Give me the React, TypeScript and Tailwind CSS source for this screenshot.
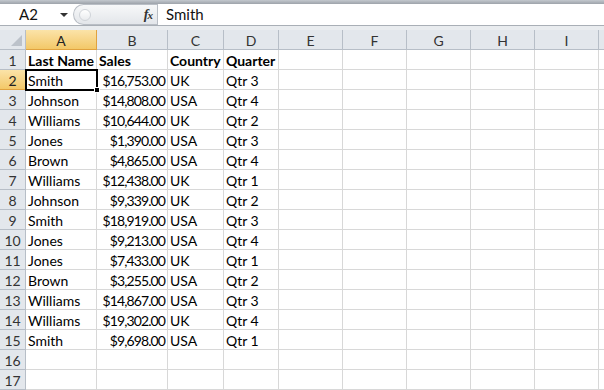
import React from "react"

const cols = ["A", "B", "C", "D", "E", "F", "G", "H", "I", ""]

const rows: string[][] = [
  ["Last Name", "Sales", "Country", "Quarter"],
  ["Smith", "$16,753.00", "UK", "Qtr 3"],
  ["Johnson", "$14,808.00", "USA", "Qtr 4"],
  ["Williams", "$10,644.00", "UK", "Qtr 2"],
  ["Jones", "$1,390.00", "USA", "Qtr 3"],
  ["Brown", "$4,865.00", "USA", "Qtr 4"],
  ["Williams", "$12,438.00", "UK", "Qtr 1"],
  ["Johnson", "$9,339.00", "UK", "Qtr 2"],
  ["Smith", "$18,919.00", "USA", "Qtr 3"],
  ["Jones", "$9,213.00", "USA", "Qtr 4"],
  ["Jones", "$7,433.00", "UK", "Qtr 1"],
  ["Brown", "$3,255.00", "USA", "Qtr 2"],
  ["Williams", "$14,867.00", "USA", "Qtr 3"],
  ["Williams", "$19,302.00", "UK", "Qtr 4"],
  ["Smith", "$9,698.00", "USA", "Qtr 1"],
  [],
  [],
]

const hdr = "flex items-center justify-center border-r border-b border-[#b7bec7] bg-[#e3e7ec] text-[#333] pt-[1px]"
const hdrSel =
  "flex items-center justify-center border-r border-b border-[#e0a23f] bg-gradient-to-b from-[#fbe3a8] to-[#f3c867] text-[#222] pt-[1px]"

export default function App() {
  return (
    <div className="w-[604px] h-[390px] overflow-hidden bg-white font-['Lato',sans-serif] text-[14px] text-black relative">
      {/* top strip */}
      <div className="h-[4px] bg-gradient-to-b from-[#c3c8ce] to-[#9da3aa]" />

      {/* formula bar */}
      <div className="h-[21px] flex bg-white">
        <div className="w-[73px] flex items-center relative">
          <span className="pl-[19px] text-[15px] text-[#111]">A2</span>
          <span className="absolute left-[60px] top-[9px] w-0 h-0 border-l-[4px] border-r-[4px] border-t-[4px] border-l-transparent border-r-transparent border-t-[#333]" />
        </div>
        <div className="w-[84px] flex items-center rounded-l-[11px] border border-r-0 border-[#b9bec5] bg-gradient-to-b from-[#f7f8f9] to-[#e3e6ea]">
          <span className="ml-[5px] w-[12px] h-[12px] rounded-full border border-[#d0d4d9] bg-gradient-to-b from-[#ffffff] to-[#e9ebee]" />
          <span className="ml-auto mr-[5px] font-['Liberation_Serif',serif] italic font-bold text-[14px] text-[#333] tracking-[-1px]">
            f<span className="text-[11px]">x</span>
          </span>
        </div>
        <div className="flex-1 flex items-center border-l border-[#b9bec5] pl-[8px] text-[15px] text-[#111]">Smith</div>
      </div>

      {/* separator */}
      <div className="h-[5px] border-t border-[#a9afb6] bg-[#e9ecef]" />

      {/* grid */}
      <div className="grid grid-cols-[26px_71px_71px_56px_55px_64px_64px_64px_64px_64px_64px] auto-rows-[20px]">
        <div className="bg-[#e3e7ec] border-r border-b border-[#b7bec7] relative">
          <svg className="absolute right-[3px] bottom-[3px]" width="11" height="11" viewBox="0 0 11 11">
            <polygon points="11,0 11,11 0,11" fill="#bcc2ca" />
          </svg>
        </div>
        {cols.map((c, i) => (
          <div key={i} className={i === 0 ? hdrSel : hdr}>
            {c}
          </div>
        ))}

        {rows.map((r, ri) => (
          <React.Fragment key={ri}>
            <div className={ri === 1 ? hdrSel : hdr}>{ri + 1}</div>
            {cols.map((_, ci) => {
              const v = r[ci] ?? ""
              const right = ci === 1 && ri > 0
              return (
                <div
                  key={ci}
                  className={`flex items-center pt-[1px] border-r border-b border-[#d8d8d8] whitespace-nowrap overflow-hidden ${
                    right ? "justify-end pr-[2px]" : "pl-[2px]"
                  } ${ri === 0 ? "font-bold" : ""}`}
                >
                  {right ? <span className="tracking-[-0.9px]">{v}</span> : v}
                </div>
              )
            })}
          </React.Fragment>
        ))}
      </div>

      {/* active cell */}
      <div className="absolute left-[25px] top-[69px] w-[73px] h-[22px] border-2 border-black pointer-events-none" />
      <div className="absolute left-[94px] top-[87px] w-[6px] h-[6px] bg-black border border-white pointer-events-none" />
    </div>
  )
}
